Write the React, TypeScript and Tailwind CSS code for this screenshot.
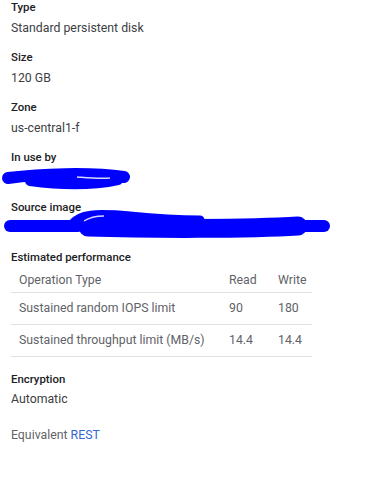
const font = { fontFamily: "Roboto, 'Liberation Sans', sans-serif" };

function Label({ children }: { children: React.ReactNode }) {
  return <div className="h-[14px] text-[11.4px] leading-[14px] font-medium text-[#202124]">{children}</div>;
}

function Field({ label, children }: { label: string; children: React.ReactNode }) {
  return (
    <div className="flex h-[50px] flex-col">
      <Label>{label}</Label>
      <div className="mt-[4px] h-[20px] text-[12.3px] leading-[20px] text-[#3c4043]">{children}</div>
    </div>
  );
}

// hand-drawn redaction marks
function ScribbleShort() {
  return (
    <svg width="134" height="26" viewBox="0 0 134 26" className="block">
      <path d="M8 12 C 40 8, 90 6, 124 11" stroke="#0000ff" strokeWidth="12" strokeLinecap="round" fill="none" />
      <path d="M30 15 C 60 19, 90 20, 118 14" stroke="#0000ff" strokeWidth="10" strokeLinecap="round" fill="none" />
      <path d="M77 11 C 90 12, 100 13, 110 12" stroke="#d6d6ff" strokeWidth="1.5" fill="none" />
    </svg>
  );
}

function ScribbleLong() {
  return (
    <svg width="334" height="36" viewBox="0 0 334 36" className="block">
      <path d="M10 20 L 78 20" stroke="#0000ff" strokeWidth="12" strokeLinecap="round" fill="none" />
      <path d="M72 18 C 80 8, 95 7, 130 10 C 150 12, 170 14, 200 14" stroke="#0000ff" strokeWidth="9" strokeLinecap="round" fill="none" />
      <path d="M88 21 C 150 23, 250 23, 298 20" stroke="#0000ff" strokeWidth="19" strokeLinecap="round" fill="none" />
      <path d="M295 20 L 324 20" stroke="#0000ff" strokeWidth="12" strokeLinecap="round" fill="none" />
      <path d="M84 15 C 90 11, 96 10, 104 10" stroke="#d6d6ff" strokeWidth="1.5" fill="none" />
    </svg>
  );
}

export default function App() {
  const rows = [
    { op: "Sustained random IOPS limit", read: "90", write: "180" },
    { op: "Sustained throughput limit (MB/s)", read: "14.4", write: "14.4" },
  ];
  return (
    <div className="w-[392px] h-[489px] bg-white" style={font}>
      <div className="pl-[11px]">
        <Field label="Type">Standard persistent disk</Field>
        <Field label="Size">120 GB</Field>
        <Field label="Zone">us-central1-f</Field>
      </div>
      <div className="flex h-[50px] flex-col">
        <div className="pl-[11px]">
          <Label>In use by</Label>
        </div>
        <div className="mt-[2px]">
          <ScribbleShort />
        </div>
      </div>
      <div className="flex h-[50px] flex-col">
        <div className="pl-[11px]">
          <Label>Source image</Label>
        </div>
        <div className="-mt-[8px]">
          <ScribbleLong />
        </div>
      </div>
      <div className="pl-[11px]">
        <div className="flex w-[301px] flex-col">
          <Label>Estimated performance</Label>
          <div className="mt-[4px] flex h-[25px] items-center border-b border-[#e0e0e0] text-[12.3px] text-[#5f6368]">
            <div className="w-[218px] pl-[8px]">Operation Type</div>
            <div className="w-[49px]">Read</div>
            <div>Write</div>
          </div>
          {rows.map((r) => (
            <div key={r.op} className="flex h-[32px] items-center border-b border-[#e0e0e0] text-[12.3px] text-[#5f6368]">
              <div className="w-[218px] pl-[8px]">{r.op}</div>
              <div className="w-[49px]">{r.read}</div>
              <div>{r.write}</div>
            </div>
          ))}
        </div>
        <div className="mt-[15px] flex flex-col">
          <Label>Encryption</Label>
          <div className="mt-[3px] h-[20px] text-[12.3px] leading-[20px] text-[#3c4043]">Automatic</div>
        </div>
        <div className="mt-[16px] h-[20px] text-[12.3px] leading-[20px] text-[#5f6368]">
          Equivalent <span className="text-[#3367d6]">REST</span>
        </div>
      </div>
    </div>
  );
}
